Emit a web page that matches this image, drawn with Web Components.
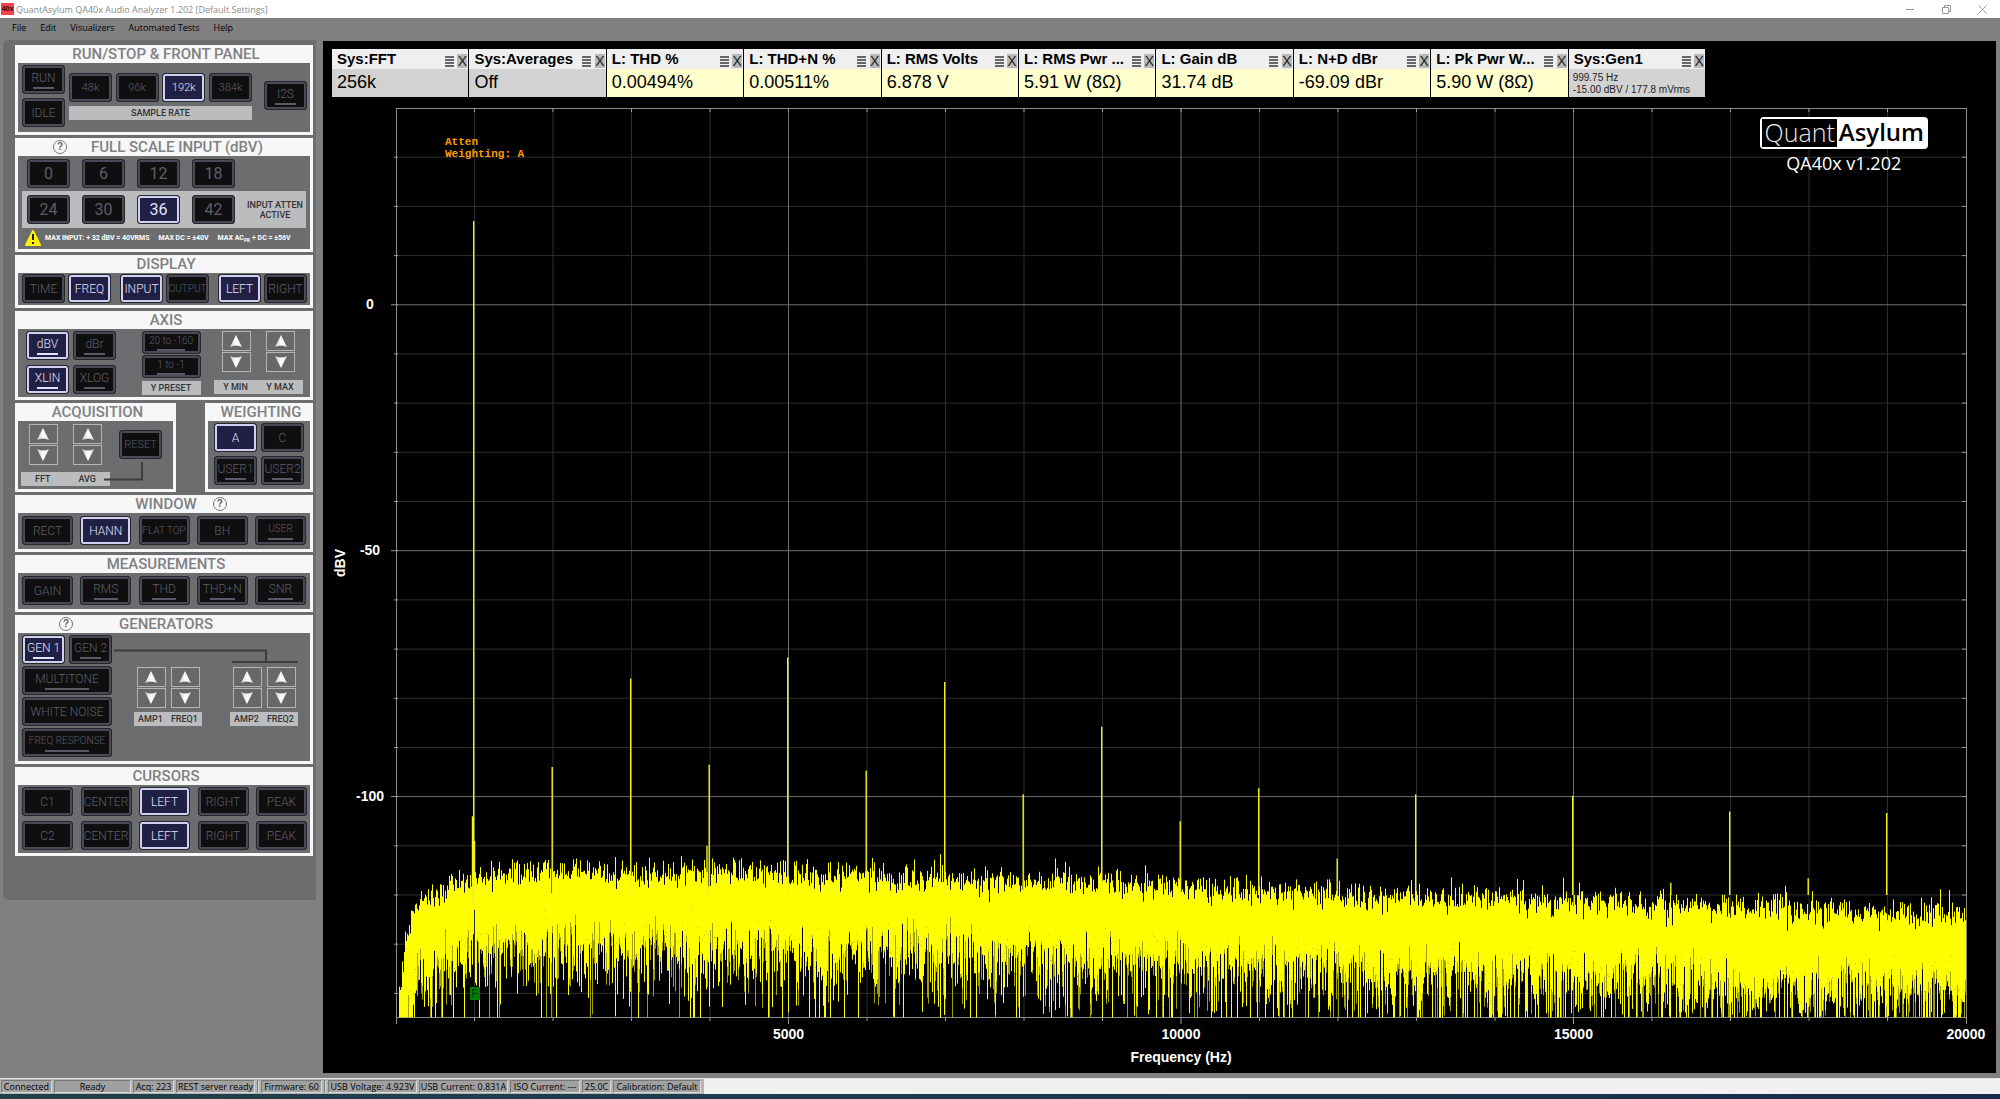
<!DOCTYPE html>
<html lang="en">
<head>
<meta charset="utf-8">
<title>QuantAsylum QA40x Audio Analyzer</title>
<style>
html,body{margin:0;height:100%;background:#808080}
</style>
</head>
<body>
<qa-app></qa-app>
<script>
const UI='"Open Sans","Noto Sans",sans-serif';
const KEY='Roboto,"Liberation Sans",sans-serif';
const ARIAL='"Liberation Sans",Arial,sans-serif';

/* Base: stamps a template into an open shadow root */
class QaElement extends HTMLElement{
  connectedCallback(){
    if(this.shadowRoot)return;
    this.attachShadow({mode:'open'}).innerHTML=this.render();
    this.ready();
  }
  ready(){}
  attr(n,d=''){return this.getAttribute(n)??d}
}

/* Back-lit push button; "mark" adds the settings underline */
customElements.define('qa-key',class extends QaElement{
  render(){
    return `<style>
    :host{display:block;flex:none;width:var(--key-w,43px);height:var(--key-h,29px)}
    button{box-sizing:border-box;width:100%;height:100%;margin:0;padding:0;border:1px solid #26262b;border-radius:3px;
      background:#0f0f0f;box-shadow:inset 0 0 0 2px #4a4956;color:#5f5d6b;font:300 12px/14px ${KEY};
      display:flex;flex-direction:column;align-items:center;justify-content:center;gap:2px;white-space:nowrap}
    :host([size=sm]) button{font-size:10px}
    :host([size=md]) button{font-size:11px}
    :host([size=lg]) button{font-size:16px;font-weight:400}
    i{width:50%;height:2px;background:#5b5967}
    :host([lit]) button{background:#201f44;box-shadow:inset 0 0 0 2px #d3cff2;color:#e4e2fb}
    :host([lit]) i{background:#e4e2fb}
    :host([slim]) button{gap:1px}
    </style><button type="button" aria-pressed="${this.hasAttribute('lit')}"><slot></slot>${this.hasAttribute('mark')?'<i></i>':''}</button>`;
  }
});

/* Up / down arrow pair */
customElements.define('qa-stepper',class extends QaElement{
  render(){
    const g=(id,d)=>`<svg viewBox="0 0 14 14" width="14" height="14"><defs><linearGradient id="${id}"><stop offset="0" stop-color="#c9c9c9"/><stop offset=".5" stop-color="#fff"/><stop offset="1" stop-color="#e2e2e2"/></linearGradient></defs><path fill="url(#${id})" d="${d}"/></svg>`;
    return `<style>
    :host{display:flex;flex:none;flex-direction:column;gap:1px;width:29px}
    button{box-sizing:border-box;height:20px;padding:0;margin:0;border:1px solid #b4b5b7;background:#67686a;display:flex;align-items:center;justify-content:center}
    </style><button type="button" aria-label="${this.attr('name')} up">${g('u','M7 1 L13 13 Q7 10 1 13Z')}</button><button type="button" aria-label="${this.attr('name')} down">${g('d','M7 13 L13 1 Q7 4 1 1Z')}</button>`;
  }
});

/* Light caption strip */
customElements.define('qa-caption',class extends QaElement{
  render(){
    return `<style>:host{box-sizing:border-box;display:flex;justify-content:space-around;align-items:center;height:14px;background:#bbbcbe;color:#333;font:500 9px/14px ${KEY};white-space:nowrap}</style><slot></slot>`;
  }
});

customElements.define('qa-help',class extends QaElement{
  render(){
    return `<style>:host{display:inline-flex}button{box-sizing:border-box;width:14px;height:14px;padding:0;border:1px solid #777;border-radius:50%;background:none;color:#666;font:700 10px/12px ${ARIAL}}</style><button type="button" aria-label="Help">?</button>`;
  }
});

/* Framed section with a white title band */
customElements.define('qa-panel',class extends QaElement{
  render(){
    return `<style>
    :host{display:flex;flex-direction:column;box-sizing:border-box;border:3px solid #f7f7f7;border-top-width:0;background:#6c6d6f}
    header{display:grid;grid-template-columns:1fr auto 1fr;align-items:center;height:18px;background:#f7f7f7;color:#808184}
    h2{margin:0;padding-left:var(--shift,4px);font:500 15px/18px ${KEY};white-space:nowrap}
    .body{display:flex;flex-direction:column}
    </style><header><slot name="before"><span></span></slot><h2>${this.attr('heading')}</h2><slot name="after"><span></span></slot></header><div class="body"><slot></slot></div>`;
  }
});

/* Readout tile above the plot */
customElements.define('qa-meter',class extends QaElement{
  render(){
    return `<style>
    :host{display:flex;flex-direction:column;box-sizing:border-box;flex:1 1 0;min-width:0;height:48px;background:#ffffce;color:#000;font-family:${ARIAL}}
    :host([sys]){background:#d2d2d2}
    header{display:flex;align-items:center;height:20px;background:#efefef;padding:0 1px 0 5px;gap:3px}
    h3{flex:1;min-width:0;margin:0;font:700 15px/20px ${ARIAL};white-space:nowrap}
    button{flex:none;padding:0;border:0;width:10px;height:14px;margin-top:3px;background:#b9b9b9;color:#222;font:400 14px/14px ${ARIAL};display:flex;align-items:center;justify-content:center}
    button.m{background:none}
    .v{flex:1;padding-left:5px;font-size:18px;line-height:26px;white-space:nowrap}
    :host([small]) .v{font-size:10px;line-height:12px;padding:3px 0 0 4px;color:#222}
    </style><header><h3>${this.attr('name')}</h3><button type="button" class="m" aria-label="Menu"><svg width="9" height="12" viewBox="0 0 9 12"><path stroke="#666" stroke-width="2" d="M0 2h9M0 5h9M0 8h9M0 11h9"/></svg></button><button type="button" aria-label="Close">X</button></header><div class="v"><slot></slot></div>`;
  }
});

/* Spectrum plot: 0 – 20 kHz, +40 to -145 dBV */
customElements.define('qa-plot',class extends QaElement{
  render(){
    return `<style>
    :host{display:grid;min-height:0;min-width:0;grid-template-columns:16px 48px minmax(0,1fr);grid-template-rows:minmax(0,1fr) 29px 20px;color:#fff;font:700 14px/16px ${ARIAL}}
    .yt{grid-area:1/1;writing-mode:vertical-rl;transform:rotate(180deg);text-align:center;align-self:center}
    .y{grid-area:1/2;display:grid;grid-template-rows:40fr 50fr 50fr 45fr;text-align:center;padding-right:4px}
    .y span{align-self:end;margin-bottom:-7px}
    .plot{grid-area:1/3;position:relative;min-height:0}
    .plot>svg{position:absolute;inset:0;width:100%;height:100%;overflow:visible;display:block}
    .x{grid-area:2/3;display:flex;margin-left:12.5%;padding-top:8px;min-width:0}
    .x span{flex:0 0 28.5714%;text-align:center}
    .xt{grid-area:3/3;text-align:center;line-height:20px}
    .note{position:absolute;left:49px;top:28px;margin:0;color:#f90;font:700 11px/12px "Liberation Mono",monospace}
    .flag{position:absolute;left:5%;top:97.3%;width:10px;height:13px;margin:-6px 0 0 -5px;background:#008000;color:#002800;font:400 10px/13px ${ARIAL};text-align:center}
    .logo{position:absolute;right:38px;top:9px;display:flex;flex-direction:column;align-items:center;font-family:${UI}}
    .mark{box-sizing:border-box;display:flex;height:32px;border:2px solid #fff;border-radius:4px;font-size:25px;line-height:26px;background:#fff}
    .mark span{background:#000;color:#e8e8e8;font-weight:300;padding:0 2px 0 3px}
    .mark b{color:#000;font-weight:600;padding:0 2px;font-size:24px}
    .ver{font-weight:400;font-size:18px;line-height:28px}
    </style>
    <div class="yt">dBV</div>
    <div class="y"><span>0</span><span>-50</span><span>-100</span></div>
    <div class="plot"><svg viewBox="0 0 1570 910" preserveAspectRatio="none" aria-hidden="true"></svg>
      <span class="flag">F</span>
      <pre class="note">Atten\nWeighting: A</pre>
      <div class="logo"><div class="mark"><span>Quant</span><b>Asylum</b></div><div class="ver">QA40x v1.202</div></div>
    </div>
    <div class="x"><span>5000</span><span>10000</span><span>15000</span><span>20000</span></div>
    <div class="xt">Frequency (Hz)</div>`;
  }
  ready(){
    const W=1570,H=910,X=f=>f/20000*W,Y=d=>(40-d)/185*H;
    let minor='',major='',tick='';
    for(let k=1;k<20;k++){const x=X(k*1000).toFixed(1);const s=`M${x} 0V${H}`;if(k%5)minor+=s;else major+=s;tick+=`M${x} ${H}v${k%5?3:6}M${x} 0v4`}
    for(let d=30;d>=-140;d-=10){const y=Y(d).toFixed(1);const s=`M0 ${y}H${W}`;if(d%50)minor+=s;else major+=s;tick+=`M${d%50?-2:-5} ${y}H2M${W-4} ${y}H${W}`}
    /* noise floor: exponential bin powers under an A-weighted average */
    let s=20231;const rnd=()=>{s=(s*1664525+1013904223)>>>0;return(s+1)/4294967297};
    const curve=[[0,-165],[40,-146],[100,-138],[150,-133],[250,-128],[450,-125],[700,-122.5],[1000,-121],[1500,-120.4],[4000,-120.4],[7000,-121.6],[10000,-123.5],[15000,-126.5],[20000,-129]];
    const mean=f=>{let i=1;while(curve[i][0]<f)i++;const[a,p]=curve[i-1],[b,q]=curve[i];return p+(q-p)*(f-a)/(b-a)};
    let solid='',faint='';
    for(let x=0;x<W;x++){
      const f=(x+.5)/W*20000,m=mean(f);let hi=-999,v=[];
      for(let i=0;i<17;i++){const l=m+10*Math.log10(-Math.log(rnd()));v.push(l);if(l>hi)hi=l}
      v.sort((a,b)=>a-b);
      if(x===77||x===78)v[0]=v[1]=-123-x%2*5;
      const top=Math.min(H,Y(hi)),b1=Math.min(H,Y(v[1])),b0=Math.min(H,Y(v[0]));
      if(b1>top)solid+=`M${x}.5 ${top.toFixed(1)}V${b1.toFixed(1)}`;
      if(b0>b1)(rnd()>.4?(solid+=`M${x}.5 ${b1.toFixed(1)}V${b0.toFixed(1)}`):(faint+=`M${x}.5 ${b1.toFixed(1)}V${b0.toFixed(1)}`));
    }
    const peaks=[[1000,17],[2000,-94],[3000,-76],[4000,-93.5],[5000,-71.7],[6000,-94.7],[7000,-76.7],[8000,-99.5],[9000,-85.8],[10000,-105],[11000,-98.3],[12000,-112.6],[13000,-99.5],[15000,-99.8],[16250,-117.5],[17000,-103],[18000,-116.6],[19000,-103.3]];
    let pk=peaks.map(([f,d])=>`M${(X(f)-.8).toFixed(1)} ${Y(d).toFixed(1)}V${Y(-120)}`).join('');
    pk+=`M76.5 ${Y(-104)}V${Y(-122)}M78.5 ${Y(-109)}V${Y(-122)}M311 ${Y(-110)}V${Y(-120)}`;
    this.shadowRoot.querySelector('svg').innerHTML=`
      <path d="${minor}" stroke="#2e2e2e" fill="none"/><path d="${major}" stroke="#707070" fill="none"/>
      <path d="M.5 0V${H+6}M0 .5H${W}M${W}.5 0V${H+6}M0 ${H-.5}H${W}" stroke="#8c8c8c" fill="none"/><path d="${tick}" stroke="#999" fill="none"/>
      <path d="${faint}" stroke="#a0a000" fill="none"/><path d="${solid}" stroke="#ff0" fill="none"/><path d="${pk}" stroke="#f4f41a" stroke-width="1.4" fill="none"/>
      <path d="M0 ${H-.5}H${W}" stroke="#8c8c8c" stroke-opacity=".6"/>`;
  }
});

customElements.define('qa-titlebar',class extends QaElement{
  render(){
    return `<style>
    :host{display:flex;align-items:center;height:18px;background:#fff;color:#8a8a8a;font:400 9px/18px ${UI};padding-left:1px}
    .app{width:13px;height:12px;background:#f4444a;color:#300;font:700 7px/12px ${ARIAL};text-align:center;overflow:hidden}
    .t{flex:1;padding:2px 0 0 2px}
    button{width:36px;height:18px;border:0;padding:0;background:none;display:flex;align-items:center;justify-content:center}
    svg{fill:none;stroke:#999}
    </style><span class="app">40x</span><span class="t">QuantAsylum QA40x Audio Analyzer 1.202 [Default.Settings]</span>
    <button aria-label="Minimize"><svg width="8" height="8"><path d="M0 4.5h8"/></svg></button>
    <button aria-label="Restore"><svg width="9" height="9"><path d="M.5 2.5h6v6h-6zM2.5 2.5v-2h6v6h-2"/></svg></button>
    <button aria-label="Close"><svg width="9" height="9"><path d="M.5.5l8 8M8.500.5l-8 8"/></svg></button>`;
  }
});

customElements.define('qa-menubar',class extends QaElement{
  render(){
    return `<style>:host{display:block;height:22px;background:#808080}nav{display:flex;gap:14px;padding:0 12px}
    button{border:0;padding:0;background:none;color:#000;font:400 9px/19px ${UI}}</style>
    <nav>${['File','Edit','Visualizers','Automated Tests','Help'].map(t=>`<button type="button">${t}</button>`).join('')}</nav>`;
  }
});

customElements.define('qa-status',class extends QaElement{
  render(){
    return `<style>:host{display:flex;box-sizing:border-box;height:16px;border-top:1px solid #e8e8e8;background:#f0f0f0;color:#000;font:400 9px/13px ${UI};white-space:nowrap}
    .in{display:flex;gap:2px;background:#b4b4b4;padding:1px 3px 1px 1px}
    span{box-sizing:border-box;border:1px solid;border-color:#777 #d8d8d8 #d8d8d8 #777;background:#a0a0a0;line-height:12px;text-align:center;overflow:hidden;flex:none}</style>
    <div class="in">${[['Connected',51],['Ready',77],['Acq: 223',41],['REST server ready',79],['',1],['Firmware: 60',61],['',1],['USB Voltage: 4.923V',89],['USB Current: 0.831A',89],['ISO Current: ---',70],['25.0C',29],['Calibration: Default',88]].map(([t,w])=>`<span style="width:${w}px">${t}</span>`).join('')}</div>`;
  }
});

/* Control column */
customElements.define('qa-controls',class extends QaElement{
  render(){
    return `<style>
    :host{display:flex;flex-direction:column;flex:none;box-sizing:border-box;width:313px;margin:0 7px 0 3px;padding:5px 3px 44px 12px;gap:3px;background:#6c6d6f;border-radius:6px 0 0 6px}
    .row{display:flex}.col{display:flex;flex-direction:column}
    .strip{display:flex;align-items:center;background:#bbbcbe}
    .atten{flex:1;text-align:center;white-space:nowrap;color:#333;font:500 9px/10px ${KEY}}
    .wide{--key-w:51px;justify-content:space-between}
    .warn{display:flex;align-items:center;gap:9px;color:#fff;font:700 7px/12px ${KEY};white-space:nowrap}
    .warn svg{margin-right:-5px}
    sub{font-size:5px;line-height:0}
    .pair{justify-content:space-around}
    svg{flex:none}
    </style>
    <qa-panel heading="RUN/STOP &amp; FRONT PANEL">
      <div class="row" style="padding:2px 3px 5px 4px;gap:4px">
        <div class="col" style="gap:4px"><qa-key mark>RUN</qa-key><qa-key>IDLE</qa-key></div>
        <div class="col" style="gap:4px;padding-top:8px;width:183px">
          <div class="row" style="justify-content:space-between"><qa-key size="md">48k</qa-key><qa-key size="md">96k</qa-key><qa-key size="md" lit>192k</qa-key><qa-key size="md">384k</qa-key></div>
          <qa-caption>SAMPLE RATE</qa-caption></div>
        <qa-key mark style="margin:16px 0 0 auto">I2S</qa-key>
      </div>
    </qa-panel>
    <qa-panel heading="FULL SCALE INPUT (dBV)" style="--shift:24px">
      <qa-help slot="before" style="padding-left:35px"></qa-help>
      <div class="row" style="padding:3px 9px 3px;gap:12px"><qa-key size="lg">0</qa-key><qa-key size="lg">6</qa-key><qa-key size="lg">12</qa-key><qa-key size="lg">18</qa-key></div>
      <div class="strip" style="margin:0 4px;padding:4px 5px;gap:12px"><qa-key size="lg">24</qa-key><qa-key size="lg">30</qa-key><qa-key size="lg" lit>36</qa-key><qa-key size="lg">42</qa-key>
        <span class="atten">INPUT ATTEN<br>ACTIVE</span></div>
      <div class="warn" style="padding:2px 0 3px 7px"><svg width="16" height="16" viewBox="0 0 16 16"><path d="M8 1L15 15H1Z" fill="#fff200" stroke="#fff200" stroke-width="2" stroke-linejoin="round"/><path d="M8 4v6M8 12v2" stroke="#222" stroke-width="2"/></svg>
        <span>MAX INPUT: + 32 dBV = 40VRMS</span><span>MAX DC = ±40V</span><span>MAX AC<sub>PK</sub> + DC = ±56V</span></div>
    </qa-panel>
    <qa-panel heading="DISPLAY">
      <div class="row" style="padding:1px 3px 2px 4px;justify-content:space-between">
        <div class="row" style="gap:3px"><qa-key>TIME</qa-key><qa-key lit>FREQ</qa-key></div>
        <div class="row" style="gap:3px"><qa-key lit>INPUT</qa-key><qa-key size="sm">OUTPUT</qa-key></div>
        <div class="row" style="gap:3px"><qa-key lit>LEFT</qa-key><qa-key>RIGHT</qa-key></div></div>
    </qa-panel>
    <qa-panel heading="AXIS">
      <div class="row" style="padding:2px 7px 2px 8px;justify-content:space-between">
        <div class="col" style="gap:5px"><div class="row" style="gap:4px"><qa-key lit mark>dBV</qa-key><qa-key mark>dBr</qa-key></div><div class="row" style="gap:4px"><qa-key lit mark>XLIN</qa-key><qa-key mark>XLOG</qa-key></div></div>
        <div class="col" style="--key-w:59px;--key-h:23px;gap:1px;margin-left:12px"><qa-key mark slim size="sm">20 to -160</qa-key><qa-key mark slim size="sm">1 to -1</qa-key><qa-caption style="margin-top:2px">Y PRESET</qa-caption></div>
        <div class="col" style="width:89px;gap:8px"><div class="row pair"><qa-stepper name="Y min"></qa-stepper><qa-stepper name="Y max"></qa-stepper></div><qa-caption><span>Y MIN</span><span>Y MAX</span></qa-caption></div>
      </div>
    </qa-panel>
    <div class="row" style="justify-content:space-between">
      <qa-panel heading="ACQUISITION" style="width:161px">
        <div class="row" style="padding:3px 3px 3px">
          <div class="col" style="width:89px;gap:7px"><div class="row pair"><qa-stepper name="FFT"></qa-stepper><qa-stepper name="AVG"></qa-stepper></div><qa-caption><span>FFT</span><span>AVG</span></qa-caption></div>
          <div class="col" style="padding-top:6px"><qa-key size="md" style="margin-left:9px">RESET</qa-key>
            <svg width="44" height="20" style="margin-left:-6px;margin-top:2px" viewBox="0 0 44 20"><path d="M0 18.500H38V1" fill="none" stroke="#3d3d3f" stroke-width="2"/></svg></div>
        </div>
      </qa-panel>
      <qa-panel heading="WEIGHTING" style="width:108px">
        <div class="col" style="padding:2px 6px 4px;gap:4px"><div class="row" style="justify-content:space-between"><qa-key lit>A</qa-key><qa-key>C</qa-key></div><div class="row" style="justify-content:space-between"><qa-key mark>USER1</qa-key><qa-key mark>USER2</qa-key></div></div>
      </qa-panel>
    </div>
    <qa-panel heading="WINDOW">
      <qa-help slot="after" style="padding-left:16px"></qa-help>
      <div class="row wide" style="padding:3px 4px 4px"><qa-key>RECT</qa-key><qa-key lit>HANN</qa-key><qa-key size="sm">FLAT TOP</qa-key><qa-key>BH</qa-key><qa-key size="sm" mark>USER</qa-key></div>
    </qa-panel>
    <qa-panel heading="MEASUREMENTS">
      <div class="row wide" style="padding:3px 4px 4px"><qa-key>GAIN</qa-key><qa-key mark>RMS</qa-key><qa-key mark>THD</qa-key><qa-key mark>THD+N</qa-key><qa-key mark>SNR</qa-key></div>
    </qa-panel>
    <qa-panel heading="GENERATORS">
      <qa-help slot="before" style="padding-left:41px"></qa-help>
      <div class="row" style="padding:2px 4px 4px">
        <div class="col" style="gap:2px;--key-w:90px"><div class="row" style="gap:4px;--key-w:43px"><qa-key lit mark>GEN 1</qa-key><qa-key mark>GEN 2</qa-key></div><qa-key mark>MULTITONE</qa-key><qa-key>WHITE NOISE</qa-key><qa-key size="sm" mark>FREQ RESPONSE</qa-key></div>
        <div class="col" style="flex:1;padding:14px 9px 0 2px">
          <svg width="184" height="14" viewBox="0 0 184 14"><path d="M0 1.500H152V13M118 13H184" fill="none" stroke="#3d3d3f" stroke-width="2"/></svg>
          <div class="row" style="justify-content:space-between;padding:4px 0 0 20px">
            <div class="col" style="width:68px;gap:4px"><div class="row pair"><qa-stepper name="Amp 1"></qa-stepper><qa-stepper name="Freq 1"></qa-stepper></div><qa-caption><span>AMP1</span><span>FREQ1</span></qa-caption></div>
            <div class="col" style="width:68px;gap:4px"><div class="row pair"><qa-stepper name="Amp 2"></qa-stepper><qa-stepper name="Freq 2"></qa-stepper></div><qa-caption><span>AMP2</span><span>FREQ2</span></qa-caption></div>
          </div></div>
      </div>
    </qa-panel>
    <qa-panel heading="CURSORS">
      <div class="col" style="padding:2px 3px 3px 4px;gap:5px">
      ${['C1','C2'].map(c=>`<div class="row wide"><qa-key>${c}</qa-key><qa-key>CENTER</qa-key><qa-key lit>LEFT</qa-key><qa-key>RIGHT</qa-key><qa-key>PEAK</qa-key></div>`).join('')}</div>
    </qa-panel>`;
  }
});

customElements.define('qa-app',class extends QaElement{
  render(){
    return `<style>
    :host{display:flex;flex-direction:column;height:100vh;background:#808080;overflow:hidden}
    main{flex:1;min-height:0;display:flex;align-items:flex-start}
    .scope{flex:1;align-self:stretch;min-width:0;box-sizing:border-box;margin:1px 4px 5px 0;background:#000;padding:8px 30px 6px 9px;display:flex;flex-direction:column;overflow:hidden}
    .meters{display:flex;gap:1px;max-width:1373px}
    qa-plot{flex:1;margin-top:11px}
    .task{height:5px;background:linear-gradient(90deg,#1f4049,#1b3a4c 50%,#182a4a)}
    </style>
    <qa-titlebar></qa-titlebar><qa-menubar></qa-menubar>
    <main><qa-controls></qa-controls>
      <section class="scope"><div class="meters">
        <qa-meter sys name="Sys:FFT">256k</qa-meter><qa-meter sys name="Sys:Averages">Off</qa-meter>
        <qa-meter name="L: THD %">0.00494%</qa-meter><qa-meter name="L: THD+N %">0.00511%</qa-meter>
        <qa-meter name="L: RMS Volts">6.878 V</qa-meter><qa-meter name="L: RMS Pwr ...">5.91 W (8Ω)</qa-meter>
        <qa-meter name="L: Gain dB">31.74 dB</qa-meter><qa-meter name="L: N+D dBr">-69.09 dBr</qa-meter>
        <qa-meter name="L: Pk Pwr W...">5.90 W (8Ω)</qa-meter><qa-meter sys small name="Sys:Gen1">999.75 Hz<br>-15.00 dBV / 177.8 mVrms</qa-meter>
      </div><qa-plot></qa-plot></section></main>
    <qa-status></qa-status><div class="task"></div>`;
  }
});
</script>
</body>
</html>
